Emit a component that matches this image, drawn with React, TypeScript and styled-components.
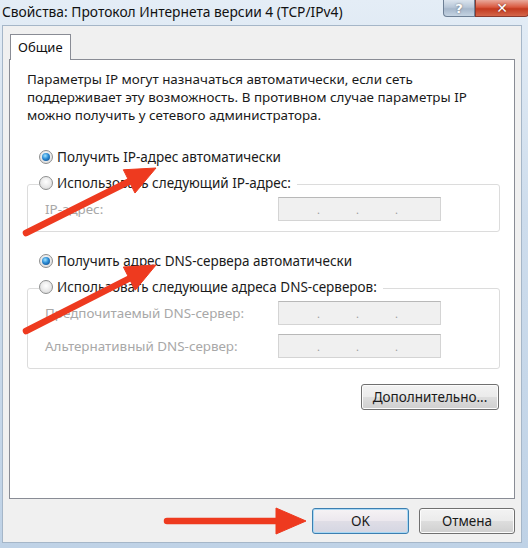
import styled, { createGlobalStyle } from "styled-components";

const GlobalStyle = createGlobalStyle`
  html, body {
    margin: 0;
    padding: 0;
    background: #d6e3f0;
  }
  * {
    box-sizing: border-box;
  }
`;

const Window = styled.div`
  position: relative;
  width: 528px;
  height: 548px;
  display: flex;
  flex-direction: column;
  overflow: hidden;
  font-family: "Noto Sans", "Open Sans", sans-serif;
  background: linear-gradient(180deg, #e4edf6 0%, #cddcec 40%, #bfd2e6 100%);
`;

const TitleBar = styled.div`
  height: 25px;
  display: flex;
  align-items: flex-start;
  justify-content: space-between;
  padding-left: 2px;
`;

const Title = styled.span`
  font-size: 13.8px;
  line-height: 24px;
  color: #111;
`;

const CaptionButtons = styled.div`
  display: flex;
  margin-right: -1px;
`;

const CaptionButton = styled.div<{ $close?: boolean }>`
  width: ${(p) => (p.$close ? 54 : 32)}px;
  height: 17px;
  display: flex;
  align-items: center;
  justify-content: center;
  border: 1px solid ${(p) => (p.$close ? "#8a3a2e" : "#6d7f95")};
  border-top: none;
  border-radius: ${(p) => (p.$close ? "0 0 4px 0" : "0 0 0 4px")};
  background: ${(p) =>
    p.$close
      ? "linear-gradient(180deg, #e9a99b 0%, #d9593f 45%, #c33a1f 55%, #d4664a 100%)"
      : "linear-gradient(180deg, #dbe4ee 0%, #b8c7d8 45%, #a6b7cb 55%, #c4d3e2 100%)"};
  color: #fff;
  font-family: "DejaVu Sans", sans-serif;
  font-weight: bold;
  font-size: ${(p) => (p.$close ? 14 : 13)}px;
  text-shadow: 0 0 2px rgba(0, 0, 0, 0.5);
`;

const Client = styled.div`
  flex: 1;
  margin: 0 6px 5px 2px;
  background: #f0f0f0;
  border: 1px solid #a5b6c8;
  padding: 7px 6px 0 6px;
  display: flex;
  flex-direction: column;
`;

const Tabs = styled.div`
  display: flex;
`;

const Tab = styled.div`
  height: 26px;
  padding: 0 7px;
  margin-left: 1px;
  background: #fff;
  border: 1px solid #898c95;
  border-bottom: none;
  font-size: 13px;
  line-height: 25px;
  color: #111;
  position: relative;
  top: 1px;
`;

const Panel = styled.div`
  height: 440px;
  background: #fff;
  border: 1px solid #898c95;
  padding: 10px 14px 0 17px;
  display: flex;
  flex-direction: column;
`;

const Intro = styled.p`
  margin: 0 0 20px 0;
  font-size: 13.4px;
  line-height: 18px;
  color: #1a1a1a;
  white-space: nowrap;
`;

const RadioRow = styled.label<{ $onGroup?: boolean }>`
  display: flex;
  align-items: center;
  width: fit-content;
  height: 26px;
  margin-left: 12px;
  padding-right: ${(p) => (p.$onGroup ? 6 : 0)}px;
  font-size: 13.5px;
  color: #1a1a1a;
  gap: 4px;
  background: #fff;
  position: relative;
  z-index: 1;
`;

const RadioDot = styled.span<{ $checked?: boolean }>`
  width: 14px;
  height: 14px;
  border-radius: 50%;
  border: 1px solid #8e8f8f;
  background: radial-gradient(circle at 50% 40%, #ffffff 0%, #e6e6e6 60%, #cfcfcf 100%);
  display: flex;
  align-items: center;
  justify-content: center;

  &::after {
    content: "";
    width: 8px;
    height: 8px;
    border-radius: 50%;
    display: ${(p) => (p.$checked ? "block" : "none")};
    background: radial-gradient(circle at 40% 35%, #9fe3ff 0%, #2a8ad4 45%, #0d3f78 100%);
  }
`;

const Group = styled.fieldset`
  margin: -12px 0 0 0;
  padding: 12px 10px 10px 17px;
  border: 1px solid #dcdcdc;
  border-radius: 3px;
  display: flex;
  flex-direction: column;
  gap: 9px;
  min-width: 0;
`;

const Field = styled.div`
  display: flex;
  align-items: center;
  justify-content: space-between;
  padding-right: 48px;
`;

const FieldLabel = styled.span`
  font-size: 13.4px;
  color: #a8a8a8;
`;

const IpBox = styled.div`
  width: 163px;
  height: 24px;
  background: #f0f0f0;
  border: 1px solid #d4d4d4;
  border-top-color: #b8b8b8;
  display: flex;
  align-items: center;
  gap: 36px;
  padding: 0 0 0 38px;
  font-size: 11px;
  color: #9c9c9c;
`;

const IpDot = styled.span`
  width: 3px;
  text-align: center;
`;

const Spacer = styled.div<{ $h: number }>`
  height: ${(p) => p.$h}px;
  flex-shrink: 0;
`;

const AdvancedRow = styled.div`
  display: flex;
  justify-content: flex-end;
  padding-right: 1px;
  margin-top: 15px;
`;

const Button = styled.button<{ $default?: boolean; $w: number }>`
  width: ${(p) => p.$w}px;
  height: 26px;
  border-radius: 3px;
  border: 1px solid ${(p) => (p.$default ? "#3c7fb1" : "#707070")};
  background: ${(p) =>
    p.$default
      ? "linear-gradient(180deg, #f6f3f5 0%, #ece8ee 48%, #dfdde6 52%, #d4d6e2 100%)"
      : "linear-gradient(180deg, #f3f3f3 0%, #ebebeb 48%, #dddddd 52%, #cfcfcf 100%)"};
  box-shadow: inset 0 0 0 1px ${(p) => (p.$default ? "#a8d8f4" : "#fcfcfc")};
  font-family: "Noto Sans", "Open Sans", sans-serif;
  font-size: 13.5px;
  color: #1a1a1a;
  padding: 0;
`;

const Footer = styled.div`
  display: flex;
  justify-content: flex-end;
  gap: 10px;
  padding: 9px 0 0 0;
`;

const Overlay = styled.svg`
  position: absolute;
  inset: 0;
  z-index: 5;
  pointer-events: none;
`;

const arrows = [
  { x1: 26, y1: 233, x2: 156, y2: 168 },
  { x1: 26, y1: 331, x2: 156, y2: 265 },
  { x1: 167, y1: 521, x2: 306, y2: 521 },
];

function Arrow({ x1, y1, x2, y2 }: { x1: number; y1: number; x2: number; y2: number }) {
  const a = Math.atan2(y2 - y1, x2 - x1);
  const len = 30;
  const half = 13;
  const bx = x2 - Math.cos(a) * len;
  const by = y2 - Math.sin(a) * len;
  const px = -Math.sin(a) * half;
  const py = Math.cos(a) * half;
  return (
    <g fill="#ee3a1f" stroke="#ee3a1f">
      <line x1={x1} y1={y1} x2={bx + Math.cos(a) * 2} y2={by + Math.sin(a) * 2} strokeWidth={6.5} strokeLinecap="round" />
      <polygon points={`${x2},${y2} ${bx + px},${by + py} ${bx - px},${by - py}`} strokeWidth={1} />
    </g>
  );
}

const IpDots = () => (
  <IpBox>
    <IpDot>.</IpDot>
    <IpDot>.</IpDot>
    <IpDot>.</IpDot>
  </IpBox>
);

export default function App() {
  return (
    <>
      <GlobalStyle />
      <Window>
        <TitleBar>
          <Title>Свойства: Протокол Интернета версии 4 (TCP/IPv4)</Title>
          <CaptionButtons>
            <CaptionButton>?</CaptionButton>
            <CaptionButton $close>✕</CaptionButton>
          </CaptionButtons>
        </TitleBar>
        <Client>
          <Tabs>
            <Tab>Общие</Tab>
          </Tabs>
          <Panel>
            <Intro>
              Параметры IP могут назначаться автоматически, если сеть
              <br />
              поддерживает эту возможность. В противном случае параметры IP
              <br />
              можно получить у сетевого администратора.
            </Intro>
            <RadioRow>
              <RadioDot $checked />
              Получить IP-адрес автоматически
            </RadioRow>
            <RadioRow $onGroup>
              <RadioDot />
              Использовать следующий IP-адрес:
            </RadioRow>
            <Group>
              <Field>
                <FieldLabel>IP-адрес:</FieldLabel>
                <IpDots />
              </Field>
            </Group>
            <Spacer $h={16} />
            <RadioRow>
              <RadioDot $checked />
              Получить адрес DNS-сервера автоматически
            </RadioRow>
            <RadioRow $onGroup>
              <RadioDot />
              Использовать следующие адреса DNS-серверов:
            </RadioRow>
            <Group>
              <Field>
                <FieldLabel>Предпочитаемый DNS-сервер:</FieldLabel>
                <IpDots />
              </Field>
              <Field>
                <FieldLabel>Альтернативный DNS-сервер:</FieldLabel>
                <IpDots />
              </Field>
            </Group>
            <AdvancedRow>
              <Button $w={138}>Дополнительно...</Button>
            </AdvancedRow>
          </Panel>
          <Footer>
            <Button $default $w={97}>
              OK
            </Button>
            <Button $w={96}>Отмена</Button>
          </Footer>
        </Client>
        <Overlay width={528} height={548}>
          {arrows.map((a, i) => (
            <Arrow key={i} {...a} />
          ))}
        </Overlay>
      </Window>
    </>
  );
}
